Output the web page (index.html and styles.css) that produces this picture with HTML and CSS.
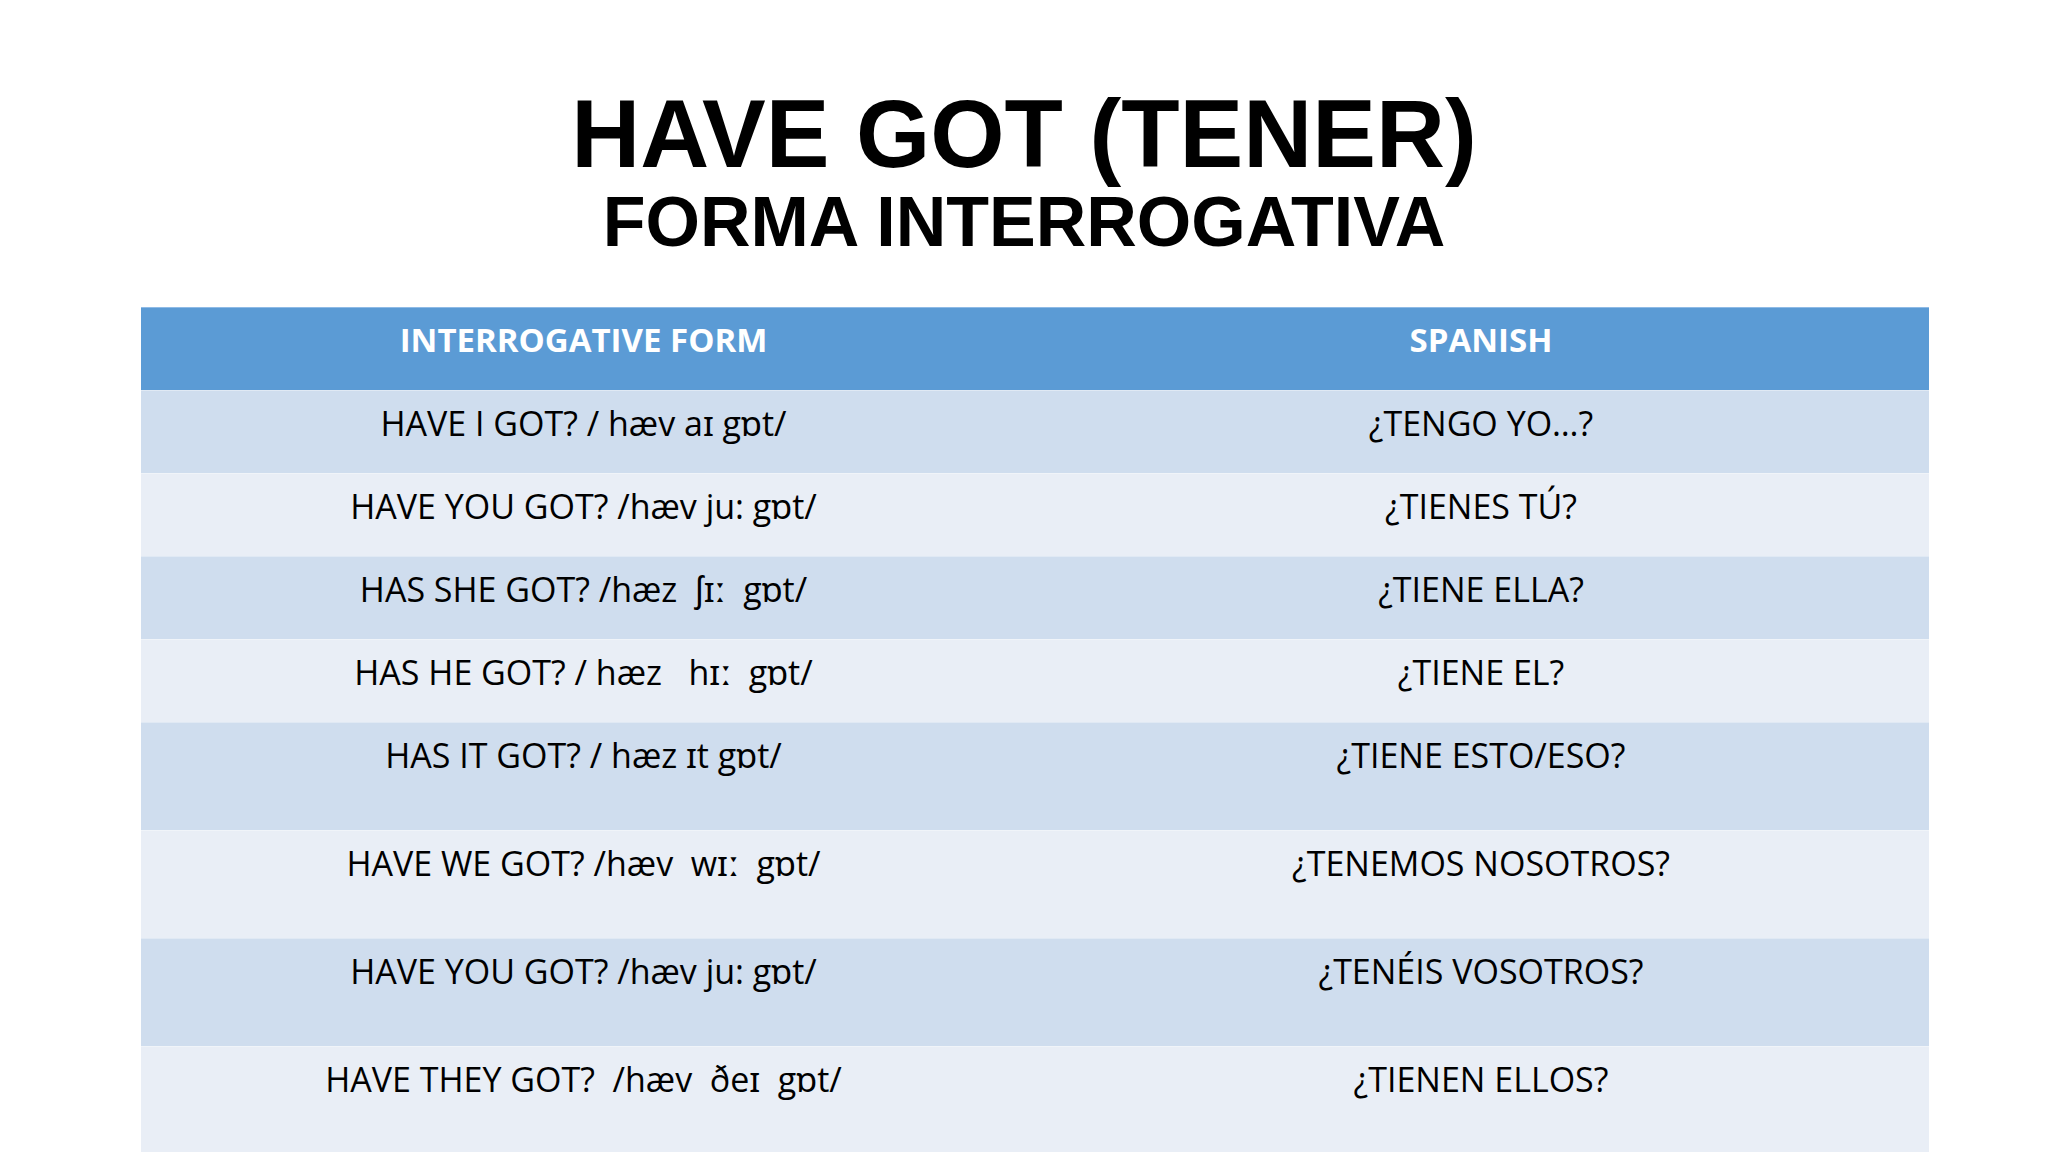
FILE: index.html
```html
<!DOCTYPE html>
<html lang="es">
<head>
<meta charset="utf-8">
<title>HAVE GOT (TENER) - Forma interrogativa</title>
<link rel="stylesheet" href="styles.css">
</head>
<body>
<div class="slide">
  <header class="heading">
    <h1 class="title">HAVE GOT (TENER)</h1>
    <h2 class="subtitle">FORMA INTERROGATIVA</h2>
  </header>
  <div class="table">
    <div class="row head">
      <div class="cell">INTERROGATIVE FORM</div>
      <div class="cell">SPANISH</div>
    </div>
    <div class="row odd">
      <div class="cell">HAVE I GOT? / hæv aɪ gɒt/</div>
      <div class="cell">¿TENGO YO…?</div>
    </div>
    <div class="row even">
      <div class="cell">HAVE YOU GOT? /hæv ju: gɒt/</div>
      <div class="cell">¿TIENES TÚ?</div>
    </div>
    <div class="row odd">
      <div class="cell">HAS SHE GOT? /hæz  ʃɪː  gɒt/</div>
      <div class="cell">¿TIENE ELLA?</div>
    </div>
    <div class="row even">
      <div class="cell">HAS HE GOT? / hæz   hɪː  gɒt/</div>
      <div class="cell">¿TIENE EL?</div>
    </div>
    <div class="row odd tall">
      <div class="cell">HAS IT GOT? / hæz ɪt gɒt/</div>
      <div class="cell">¿TIENE ESTO/ESO?</div>
    </div>
    <div class="row even tall">
      <div class="cell">HAVE WE GOT? /hæv  wɪː  gɒt/</div>
      <div class="cell">¿TENEMOS NOSOTROS?</div>
    </div>
    <div class="row odd tall">
      <div class="cell">HAVE YOU GOT? /hæv ju: gɒt/</div>
      <div class="cell">¿TENÉIS VOSOTROS?</div>
    </div>
    <div class="row even tall">
      <div class="cell">HAVE THEY GOT?  /hæv  ðeɪ  gɒt/</div>
      <div class="cell">¿TIENEN ELLOS?</div>
    </div>
  </div>
</div>
</body>
</html>
```

FILE: styles.css
```css
html, body {
  margin: 0;
  padding: 0;
  background: #ffffff;
}

.slide {
  width: 2048px;
  height: 1152px;
  overflow: hidden;
  display: flex;
  flex-direction: column;
}

.heading {
  padding-top: 87px;
  display: flex;
  flex-direction: column;
  align-items: center;
  font-family: "Liberation Sans", Arial, sans-serif;
  font-weight: bold;
  color: #000000;
}

.title {
  margin: 0;
  font-size: 95.5px;
  line-height: 95px;
  font-weight: bold;
}

.subtitle {
  margin: 5px 0 0 0;
  font-size: 70px;
  line-height: 70px;
  font-weight: bold;
}

.table {
  margin: 50px 0 0 141px;
  width: 1788px;
  display: flex;
  flex-direction: column;
  font-family: "Open Sans", "Noto Sans", "DejaVu Sans", sans-serif;
}

.row {
  display: grid;
  grid-template-columns: 885px 903px;
  height: 83px;
  box-sizing: border-box;
  border-top: 1px solid rgba(255, 255, 255, 0.35);
}

.row.tall {
  height: 108px;
}

.row.head {
  background: #5b9bd5;
  color: #ffffff;
  font-weight: bold;
  border-top: 1px solid #8fbbe6;
}

.row.odd {
  background: #cfddee;
  color: #000000;
}

.row.even {
  background: #e9eef6;
  color: #000000;
}

.cell {
  padding-top: 12px;
  text-align: center;
  font-size: 34px;
  line-height: 40px;
  white-space: pre;
}

.head .cell {
  font-size: 33px;
}

.cell + .cell {
  padding-left: 7px;
}
```
